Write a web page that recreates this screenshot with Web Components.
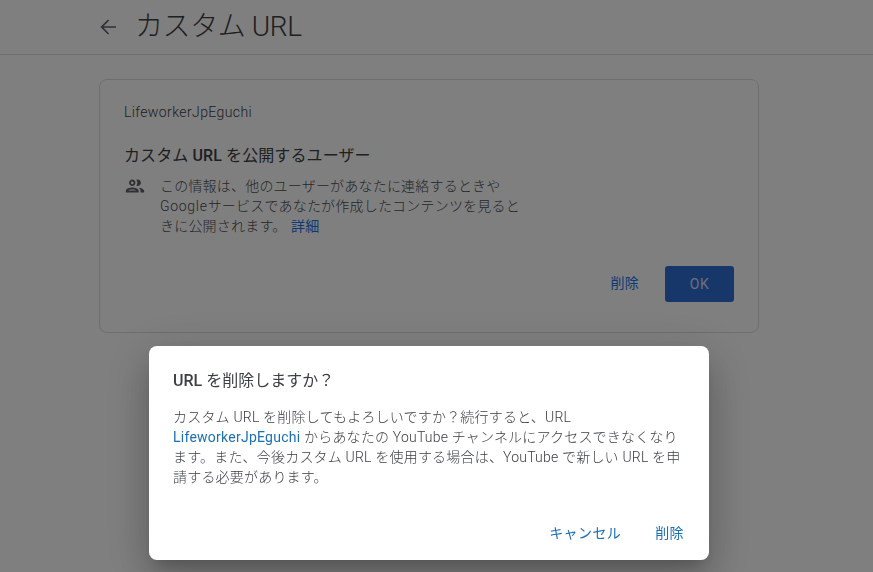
<!DOCTYPE html>
<html lang="ja">
<head>
<meta charset="utf-8">
<title>カスタム URL</title>
<style>
  html, body { margin: 0; height: 100%; }
  body { font-family: Roboto, "Noto Sans CJK JP", sans-serif; overflow: hidden; background: #fff; }
</style>
</head>
<body>
<page-shell>
  <page-header title="カスタム URL"></page-header>
  <url-card></url-card>
</page-shell>
<url-dialog></url-dialog>

<script>
class PageShell extends HTMLElement {
  constructor() {
    super();
    this.attachShadow({ mode: 'open' }).innerHTML = `
      <style>
        :host { display: block; height: 572px; background: #fff; color: #202124; }
      </style>
      <slot></slot>`;
  }
}

class PageHeader extends HTMLElement {
  constructor() {
    super();
    this.attachShadow({ mode: 'open' }).innerHTML = `
      <style>
        :host { display: flex; align-items: center; height: 55px; box-sizing: border-box; padding-left: 96px; border-bottom: 1px solid #dadce0; }
        svg { width: 24px; height: 24px; fill: #5f6368; flex: none; }
        h1 { margin: 0 0 0 15px; font-size: 28px; font-weight: 300; line-height: 52px; letter-spacing: -0.4px; color: #3c4043; }
      </style>
      <svg viewBox="0 0 24 24"><path d="M20 11.2H7.6l5.6-5.6L12 4.4 4.4 12l7.6 7.6 1.2-1.2-5.6-5.6H20z"/></svg>
      <h1></h1>`;
    this.shadowRoot.querySelector('h1').textContent = this.getAttribute('title');
  }
}

class UrlCard extends HTMLElement {
  constructor() {
    super();
    this.attachShadow({ mode: 'open' }).innerHTML = `
      <style>
        :host { display: block; box-sizing: border-box; width: 660px; height: 254px; margin: 24px 0 0 99px; padding: 23px 24px 30px; border: 1px solid #dadce0; border-radius: 8px; font-size: 14px; letter-spacing: .2px; font-weight: 300; color: #3c4043; }
        .name { line-height: 18px; letter-spacing: .4px; color: #3c4043; }
        h2 { margin: 23px 0 0; font-size: 16px; font-weight: 400; line-height: 24px; letter-spacing: .1px; color: #3c4043; }
        h2 b { font-weight: 500; }
        .info { display: flex; gap: 14px; margin-top: 8px; }
        svg { width: 22px; height: 22px; fill: #5f6368; flex: none; margin-top: -1px; }
        p { margin: 0; width: 370px; line-height: 20px; color: #4a4d50; }
        .latin { letter-spacing: .7px; }
        a { color: #1a73e8; text-decoration: none; font-weight: 400; margin-left: 1px; }
        .actions { display: flex; justify-content: flex-end; align-items: center; gap: 26px; margin-top: 30px; }
        .ok { width: 69px; height: 36px; line-height: 36px; text-align: center; background: #2f6fd6; color: #d5e0f5; border-radius: 3px; font-weight: 400; letter-spacing: .5px; }
        .del { color: #1a73e8; font-weight: 400; margin-bottom: 4px; }
      </style>
      <div class="name">LifeworkerJpEguchi</div>
      <h2>カスタム <b>URL</b> を公開するユーザー</h2>
      <div class="info">
        <svg viewBox="0 0 24 24"><path d="M9 13.75c-2.34 0-7 1.17-7 3.5V19h14v-1.75c0-2.33-4.66-3.5-7-3.5zM4.34 17c.84-.58 2.87-1.25 4.66-1.25s3.82.67 4.66 1.25H4.34zM9 12c1.93 0 3.5-1.57 3.5-3.5S10.93 5 9 5 5.5 6.57 5.5 8.5 7.07 12 9 12zm0-5c.83 0 1.5.67 1.5 1.5S9.83 10 9 10s-1.5-.67-1.5-1.5S8.17 7 9 7zm7.04 6.81c1.16.84 1.96 1.96 1.96 3.44V19h4v-1.75c0-2.02-3.5-3.17-5.96-3.44zM15 12c1.93 0 3.5-1.57 3.5-3.5S16.93 5 15 5c-.54 0-1.04.13-1.5.35.63.89 1 1.98 1 3.15s-.37 2.26-1 3.15c.46.22.96.35 1.5.35z"/></svg>
        <p>この情報は、他のユーザーがあなたに連絡するときや<span class="latin">Google</span>サービスであなたが作成したコンテンツを見るときに公開されます。 <a>詳細</a></p>
      </div>
      <div class="actions"><span class="del">削除</span><span class="ok">OK</span></div>`;
  }
}

class UrlDialog extends HTMLElement {
  constructor() {
    super();
    this.attachShadow({ mode: 'open' }).innerHTML = `
      <style>
        :host { position: fixed; inset: 0; display: block; background: rgba(0,0,0,.5); }
        .box { position: absolute; left: 149px; top: 346px; width: 560px; height: 214px; box-sizing: border-box; padding: 24px; background: #fff; border-radius: 8px; box-shadow: 0 11px 15px -7px rgba(0,0,0,.2), 0 24px 38px 3px rgba(0,0,0,.14), 0 9px 46px 8px rgba(0,0,0,.12); display: flex; flex-direction: column; }
        h3 { margin: 1px 0 0; font-size: 16px; font-weight: 400; line-height: 20px; color: #3c4043; }
        h3 b { font-weight: 500; }
        p { margin: 16px 0 0; font-size: 14px; font-weight: 300; letter-spacing: .2px; line-height: 20px; color: #3c4043; }
        a { color: #1c6fb3; font-weight: 400; letter-spacing: .25px; }
        .actions { margin-top: auto; display: flex; justify-content: flex-end; gap: 34px; font-size: 14px; letter-spacing: .4px; line-height: 20px; color: #1c6fb3; margin-bottom: -7px; padding-right: 1px; }
      </style>
      <div class="box">
        <h3><b>URL</b> を削除しますか？</h3>
        <p>カスタム URL を削除してもよろしいですか？続行すると、URL <a>LifeworkerJpEguchi</a> からあなたの YouTube チャンネルにアクセスできなくなります。また、今後カスタム URL を使用する場合は、YouTube で新しい URL を申請する必要があります。</p>
        <div class="actions"><span>キャンセル</span><span>削除</span></div>
      </div>`;
  }
}

customElements.define('page-shell', PageShell);
customElements.define('page-header', PageHeader);
customElements.define('url-card', UrlCard);
customElements.define('url-dialog', UrlDialog);
</script>
</body>
</html>
